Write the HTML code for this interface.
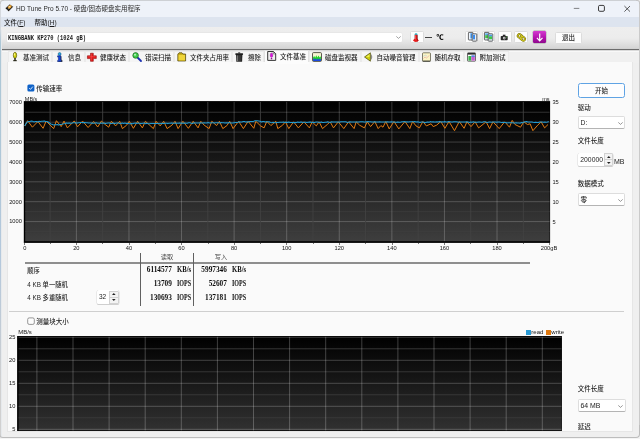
<!DOCTYPE html>
<html lang="zh-CN"><head><meta charset="utf-8"><title>HD Tune Pro 5.70</title><style>
html,body{margin:0;padding:0}
body{width:640px;height:439px;overflow:hidden;position:relative;background:#efefef;font-family:"Liberation Sans","Noto Sans CJK SC",sans-serif;font-size:6.5px;color:#222}
.a{position:absolute;white-space:nowrap;line-height:1}
.t{position:absolute;white-space:nowrap;line-height:8px;height:8px;font-size:6.5px;color:#1e1e1e;font-weight:500}
.n{position:absolute;white-space:nowrap;line-height:6px;height:6px;font-size:5.7px;color:#151515}
.m{position:absolute;white-space:nowrap;line-height:8px;height:8px;font-family:"Liberation Serif",serif;font-weight:bold;font-size:7.3px;color:#0c0c0c;text-align:right}
.box{position:absolute;box-sizing:border-box;background:#fff;border:0.5px solid #dddddd;border-bottom-color:#b4b4b4;border-radius:1.8px}
.btn{position:absolute;box-sizing:border-box;background:#fdfdfd;border:0.5px solid #dcdcdc;border-radius:1.5px}
.tab{position:absolute;box-sizing:border-box;top:51.4px;height:11.2px;background:#f5f5f5;border:0.5px solid #ebebeb;border-bottom:none}
svg{position:absolute;overflow:visible}
</style></head><body>
<div id="win" style="position:absolute;left:0;top:0;width:640px;height:439px;will-change:transform">
<div class="a" style="left:0;top:0;width:640px;height:17px;background:#eef2f9"></div>
<div class="a" style="left:0;top:17px;width:640px;height:10.2px;background:#dde4ef"></div>
<div class="a" style="left:0;top:27px;width:640px;height:22px;background:linear-gradient(#eeeeee 0,#ececec 50%,#e2e2e2 72%,#d3d3d3 100%)"></div>
<div class="a" style="left:0;top:48px;width:640px;height:4px;background:linear-gradient(#d2d2d2 0,#d2d2d2 25%,#6c6c6c 25%,#6c6c6c 50%,#dadada 50%,#dadada 75%,#f8f8f8 75%,#f8f8f8 100%)"></div>
<div class="a" style="left:0;top:52px;width:640px;height:11px;background:#f0f0f0"></div>
<div class="a" style="left:0;top:0;width:640px;height:0.9px;background:#cdd0d4"></div>
<svg style="left:4.8px;top:4.1px" width="8.6" height="7.8" viewBox="0 0 8.6 7.8"><path d="M0.2 4.3 L4.7 0.2 L8.4 2.7 L3.7 7.6 Z" fill="#1c1a18" stroke="#fff" stroke-width="0.5" stroke-opacity="0.8"/><ellipse cx="4.7" cy="2.9" rx="2.1" ry="1.5" transform="rotate(-32 4.7 2.9)" fill="#e29a2c"/><ellipse cx="4.5" cy="2.7" rx="0.9" ry="0.7" fill="#ffe6b0"/><path d="M2.6 5.2L4.2 4.4" stroke="#d8d8d8" stroke-width="0.5"/></svg>
<div class="t" style="left:16px;top:4.5px;color:#2c2c2c;font-weight:400">HD Tune Pro 5.70 - 硬盘/固态硬盘实用程序</div>
<svg style="left:570px;top:2px" width="66" height="14" viewBox="570 2 66 14"><path d="M573.8 8.4H579.3" stroke="#444" stroke-width="0.65" fill="none"/><rect x="598.5" y="5.4" width="5.9" height="5.9" rx="1.3" stroke="#333" stroke-width="0.95" fill="none"/><path d="M624.4 6L630 11.6M630 6L624.4 11.6" stroke="#333" stroke-width="0.8" fill="none"/></svg>
<div class="t" style="left:4px;top:18.5px"><span>文件(<u>F</u>)</span></div>
<div class="t" style="left:34.5px;top:18.5px"><span>帮助(<u>H</u>)</span></div>
<div class="a" style="left:6.9px;top:32.7px;width:395.6px;height:9.6px;background:#fff;border-radius:1.2px;box-shadow:0 0 0 0.4px #e2e2e2"></div>
<div class="a" style="left:8.2px;top:33.5px;height:8px;line-height:8px;font-family:'Liberation Mono',monospace;font-size:7.4px;font-weight:bold;color:#1a1a1a;transform:scaleX(0.732);transform-origin:0 50%">KINGBANK KP270 (1024 gB)</div>
<svg style="left:395.5px;top:36px" width="5" height="3" viewBox="0 0 5 3"><path d="M0.3 0.4L2.5 2.4L4.7 0.4" stroke="#666" stroke-width="0.6" fill="none"/></svg>
<div class="btn" style="left:409.6px;top:31.2px;width:14.4px;height:11.9px"></div>
<svg style="left:413.3px;top:32.7px" width="6" height="9.2" viewBox="0 0 6 9.2"><rect x="1.7" y="0.2" width="2.7" height="7" rx="1" fill="#2fb6c8"/><rect x="1.7" y="1.8" width="2.7" height="5" fill="#e61c1c"/><ellipse cx="2.9" cy="7.3" rx="2.5" ry="1.75" fill="#e61c1c"/><path d="M4.2 2.2V6Q5.3 7.2 4.4 8.5" stroke="#7a0a0a" stroke-width="0.55" fill="none"/><path d="M2.4 2.4V6.4" stroke="#ff9090" stroke-width="0.5"/></svg>
<div class="a" style="left:425.3px;top:37px;width:7px;height:0.8px;background:#444"></div>
<div class="t" style="left:436.4px;top:33.2px;font-weight:900;color:#000;font-size:7.2px;transform:scaleY(0.78);font-family:'Liberation Sans','Noto Sans CJK SC',sans-serif">℃</div>
<div class="btn" style="left:464.9px;top:31.2px;width:13.5px;height:11.8px"></div>
<div class="btn" style="left:481.6px;top:31.2px;width:13.5px;height:11.8px"></div>
<div class="btn" style="left:498px;top:31.2px;width:13.5px;height:11.8px"></div>
<div class="btn" style="left:514.2px;top:31.2px;width:13.5px;height:11.8px"></div>
<svg style="left:467.8px;top:32.4px" width="9.4" height="9.6" viewBox="0 0 9.4 9.6"><rect x="0.4" y="0.4" width="4.6" height="7.6" rx="0.6" fill="#eef5fd" stroke="#2a2a2a" stroke-width="0.7"/><rect x="2.4" y="1.2" width="1.9" height="5.2" fill="#4a9aee"/><rect x="4.2" y="1.8" width="4.6" height="7.4" rx="0.6" fill="#eaf3fd" stroke="#2a2a2a" stroke-width="0.7"/><rect x="5" y="2.8" width="2" height="4.6" fill="#3b8cec"/><rect x="4.8" y="7.9" width="3.4" height="0.8" fill="#bbb"/></svg>
<svg style="left:484.4px;top:32.4px" width="9.4" height="9.6" viewBox="0 0 9.4 9.6"><rect x="0.4" y="0.4" width="4.6" height="7.6" rx="0.6" fill="#dcecf8" stroke="#2a2a2a" stroke-width="0.7"/><rect x="1.2" y="1.4" width="3" height="2" fill="#5aa8e8"/><rect x="1.2" y="3.2" width="3" height="3" fill="#46c44a"/><rect x="4.2" y="1.8" width="4.6" height="7.4" rx="0.6" fill="#d8eaf8" stroke="#2a2a2a" stroke-width="0.7"/><rect x="5" y="2.8" width="3" height="1.8" fill="#4a9ae6"/><rect x="5" y="4.4" width="3" height="2.8" fill="#3ec846"/><rect x="4.8" y="7.9" width="3.4" height="0.8" fill="#bbb"/></svg>
<svg style="left:500.4px;top:34px" width="8.6" height="7" viewBox="0 0 9 8"><rect x="0.4" y="2.2" width="8" height="5" rx="0.8" fill="#2a2a2a"/><rect x="2.8" y="0.8" width="3" height="1.8" fill="#2a2a2a"/><circle cx="4.4" cy="4.7" r="1.5" fill="#e8e8e8"/><circle cx="4.4" cy="4.7" r="0.8" fill="#444"/><rect x="6.4" y="3" width="1.2" height="0.9" fill="#58c34a"/></svg>
<svg style="left:516.6px;top:33.4px" width="8.8" height="8.8" viewBox="0 0 9 9"><g transform="rotate(40 4.5 4.5)" fill="none"><rect x="0.2" y="2.8" width="5" height="3.4" rx="1.6" stroke="#6b610c" stroke-width="2"/><rect x="3.8" y="2.8" width="5" height="3.4" rx="1.6" stroke="#6b610c" stroke-width="2"/><rect x="0.2" y="2.8" width="5" height="3.4" rx="1.6" stroke="#cfc820" stroke-width="1.1"/><rect x="3.8" y="2.8" width="5" height="3.4" rx="1.6" stroke="#cfc820" stroke-width="1.1"/></g></svg>
<div class="a" style="left:533px;top:31.4px;width:13px;height:12px;border-radius:1.2px;background:linear-gradient(#d43ad0,#b010ac 60%,#8e0a8c);box-shadow:0 0 0 0.4px #a2a2a2"></div>
<svg style="left:535.8px;top:33px" width="7.4" height="9" viewBox="0 0 7.4 9"><path d="M3.7 0.5V7.5M0.9 4.9L3.7 7.8L6.5 4.9" stroke="#fff" stroke-width="1.2" fill="none"/></svg>
<div class="btn" style="left:554.6px;top:31.8px;width:27.6px;height:11.8px;background:#fdfdfd"></div>
<div class="t" style="left:554.6px;width:27.6px;text-align:center;top:33.6px">退出</div>
<div class="tab" style="left:8px;width:44px"></div>
<svg style="left:11.5px;top:52px" width="6" height="10" viewBox="0 0 6 10"><ellipse cx="3" cy="3.3" rx="1.7" ry="3" fill="#d6d410" stroke="#4a4608" stroke-width="0.6"/><ellipse cx="2.5" cy="2.4" rx="0.6" ry="1.2" fill="#f6f48a"/><rect x="2.2" y="6" width="1.6" height="2" fill="#3a3a2a"/><rect x="1.3" y="8" width="3.4" height="1.2" fill="#2d2d1e"/></svg>
<div class="t" style="left:23px;top:54px">基准测试</div>
<div class="tab" style="left:52px;width:32.5px"></div>
<svg style="left:57.3px;top:52px" width="6" height="10" viewBox="0 0 6 10"><circle cx="2.6" cy="2" r="1.5" fill="#25a6e2" stroke="#0e4f78" stroke-width="0.5"/><path d="M0.6 3.8H3.9V8.4H4.8V9.7H0.6V8.4H1.4V5.1H0.6Z" fill="#1243e0" stroke="#071a66" stroke-width="0.5"/><path d="M4.1 4.4V8.2H5V9.9H1.5" stroke="#111" stroke-width="0.5" fill="none"/></svg>
<div class="t" style="left:68px;top:54px">信息</div>
<div class="tab" style="left:84.5px;width:44.5px"></div>
<svg style="left:87.4px;top:52px" width="10" height="10" viewBox="0 0 10 10"><path d="M3.5 1.2H6.3V3.8H9.3V6.6H6.3V9.3H3.5V6.6H0.4V3.8H3.5Z" fill="#e31a1a" stroke="#8e0d0d" stroke-width="0.6"/><path d="M4.3 2V8.4M1.3 4.7H8.4" stroke="#ff6a6a" stroke-width="0.6" opacity="0.7"/></svg>
<div class="t" style="left:100px;top:54px">健康状态</div>
<div class="tab" style="left:129px;width:45px"></div>
<svg style="left:132.2px;top:52px" width="10" height="10" viewBox="0 0 10 10"><path d="M5 5L9 9" stroke="#1a2fb0" stroke-width="1.8" stroke-linecap="round"/><circle cx="3.6" cy="3.4" r="2.8" fill="#3fd04b" stroke="#1b5a22" stroke-width="0.7"/><circle cx="3" cy="2.7" r="1" fill="#b9f5bd"/></svg>
<div class="t" style="left:145px;top:54px">错误扫描</div>
<div class="tab" style="left:174px;width:58px"></div>
<svg style="left:177px;top:52px" width="10" height="10" viewBox="0 0 10 10"><path d="M0.8 2.2L2 0.8H5L6 2H8.6V9H0.8Z" fill="#c9ae1a" stroke="#4d4208" stroke-width="0.7"/><rect x="1.6" y="3" width="6.4" height="5.4" fill="#efd53a"/></svg>
<div class="t" style="left:190px;top:54px">文件夹占用率</div>
<div class="tab" style="left:232px;width:32px"></div>
<svg style="left:234.9px;top:52px" width="8.4" height="10" viewBox="0 0 8.4 10"><rect x="3.2" y="0.4" width="2" height="1" fill="#222"/><rect x="0.3" y="1.2" width="7.8" height="1.7" rx="0.6" fill="#1c1c1c"/><path d="M1 3H7.4L7.1 9.7H1.3Z" fill="#262626"/><path d="M2.3 3.4V9.2" stroke="#a8a8a8" stroke-width="0.8"/><path d="M4 3.4V9.2" stroke="#6a6a6a" stroke-width="0.6"/><path d="M5.6 3.4V9.2" stroke="#4a4a4a" stroke-width="0.5"/></svg>
<div class="t" style="left:248px;top:54px">擦除</div>
<div class="tab" style="left:264px;width:45px;top:50.1px;height:13.5px;background:#fcfcfc;border-color:#e2e2e2"></div>
<svg style="left:266.8px;top:51.2px" width="9.4" height="10" viewBox="0 0 9.4 10"><path d="M0.7 0.5H6.4L8.7 2.7V9.4H0.7Z" fill="#efefef" stroke="#222" stroke-width="0.9" stroke-linejoin="round"/><path d="M6.2 0.6V2.9H8.6" stroke="#222" stroke-width="0.5" fill="none"/><ellipse cx="4.5" cy="4.2" rx="1.25" ry="2.3" fill="#dc14dc" stroke="#70087a" stroke-width="0.3"/><rect x="3.8" y="7" width="1.4" height="1.3" fill="#8a0a92"/></svg>
<div class="t" style="left:280px;top:53.1px">文件基准</div>
<div class="tab" style="left:309px;width:51.5px"></div>
<svg style="left:312px;top:52px" width="10" height="10" viewBox="0 0 10 10"><rect x="0.5" y="0.6" width="9" height="8.8" rx="1" fill="#f6f5d2" stroke="#33332a" stroke-width="0.8"/><path d="M1.1 8.9V5.2L2.2 3.9L3.2 5.8L4.3 3.2L5.3 5.6L6.5 3.6L7.6 5.4L8.9 4.2V8.9Z" fill="#22d42a"/><path d="M1.1 8.9V7.6L2 6L2.9 7.8L3.9 6.2L4.9 7.9L5.9 6.2L6.9 7.8L7.9 6.4L8.9 7.6V8.9Z" fill="#1c48e0"/></svg>
<div class="t" style="left:325px;top:54px">磁盘监视器</div>
<div class="tab" style="left:360.5px;width:58.0px"></div>
<svg style="left:363.6px;top:52px" width="10" height="10" viewBox="0 0 10 10"><path d="M7 2Q9.6 5 7 8Z" fill="#8e8e8e"/><path d="M0.5 5L6.4 0.8V9.2Z" fill="#cfd010" stroke="#45450a" stroke-width="0.7" stroke-linejoin="round"/><path d="M2.2 4.8L5.4 2.6V5Z" fill="#f2f25a"/></svg>
<div class="t" style="left:376.4px;top:54px">自动噪音管理</div>
<div class="tab" style="left:418.5px;width:45.0px"></div>
<svg style="left:421.8px;top:52px" width="9" height="10" viewBox="0 0 9 10"><rect x="0.5" y="0.8" width="8" height="8.4" rx="0.8" fill="#fbf5c4" stroke="#4c4a3a" stroke-width="0.7"/><path d="M0.6 9.2H8.4" stroke="#2a2a22" stroke-width="0.8"/><path d="M1.5 6.5L3 5L4.5 6L7.4 3.4" stroke="#e79a9a" stroke-width="0.6" fill="none"/><path d="M1.4 4.2L3.4 3.2L5 4.2" stroke="#9ab6e8" stroke-width="0.5" fill="none"/></svg>
<div class="t" style="left:434.5px;top:54px">随机存取</div>
<div class="tab" style="left:463.5px;width:45.5px"></div>
<svg style="left:466.8px;top:52px" width="9" height="10" viewBox="0 0 9 10"><rect x="0.5" y="0.8" width="8" height="8.4" rx="0.6" fill="#fdfdfd" stroke="#333" stroke-width="0.7"/><rect x="0.8" y="1" width="7.4" height="1.6" fill="#2c2c2c"/><rect x="1.4" y="4" width="3" height="4.6" fill="#39b54a"/><rect x="4.4" y="4.6" width="3.4" height="4" fill="#c85ad0"/><rect x="4.4" y="3.4" width="3.4" height="1.4" fill="#3c6be0"/></svg>
<div class="t" style="left:479.5px;top:54px">附加测试</div>
<div class="a" style="left:7px;top:62.4px;width:625.8px;height:369.8px;box-sizing:border-box;background:#fafafa;border:0.6px solid #e6e6e6;border-top:none"></div>
<div class="a" style="left:264.5px;top:62px;width:44px;height:2px;background:#fcfcfc"></div>
<svg style="left:27px;top:84px" width="8" height="8" viewBox="27 84 8 8"><rect x="27.4" y="84.4" width="7" height="7.1" rx="1.5" fill="#0f62c8"/><path d="M29.2 88L30.5 89.4L32.8 86.6" stroke="#fff" stroke-width="0.8" fill="none"/></svg>
<div class="t" style="left:36.2px;top:84.7px">传输速率</div>
<svg style="left:23px;top:101px" width="528" height="142" viewBox="23 101 528 142"><defs><linearGradient id="g1" x1="0" y1="0" x2="0" y2="1"><stop offset="0" stop-color="#000"/><stop offset="0.22" stop-color="#0b0b0b"/><stop offset="1" stop-color="#3e3e3e"/></linearGradient></defs><rect x="23.8" y="101.1" width="526.3000000000001" height="141.8" fill="#000"/><rect x="25.2" y="101.9" width="524.4" height="139.29999999999998" fill="url(#g1)"/><line x1="25.2" x2="549.6" y1="112.24" y2="112.24" stroke="#3d3d3d" stroke-width="0.8"/><line x1="25.2" x2="549.6" y1="122.18" y2="122.18" stroke="#fff" stroke-opacity="0.27" stroke-width="0.75"/><line x1="25.2" x2="549.6" y1="132.12" y2="132.12" stroke="#3d3d3d" stroke-width="0.8"/><line x1="25.2" x2="549.6" y1="142.06" y2="142.06" stroke="#fff" stroke-opacity="0.27" stroke-width="0.75"/><line x1="25.2" x2="549.6" y1="152.00" y2="152.00" stroke="#3d3d3d" stroke-width="0.8"/><line x1="25.2" x2="549.6" y1="161.94" y2="161.94" stroke="#fff" stroke-opacity="0.27" stroke-width="0.75"/><line x1="25.2" x2="549.6" y1="171.88" y2="171.88" stroke="#3d3d3d" stroke-width="0.8"/><line x1="25.2" x2="549.6" y1="181.82" y2="181.82" stroke="#fff" stroke-opacity="0.27" stroke-width="0.75"/><line x1="25.2" x2="549.6" y1="191.76" y2="191.76" stroke="#3d3d3d" stroke-width="0.8"/><line x1="25.2" x2="549.6" y1="201.70" y2="201.70" stroke="#fff" stroke-opacity="0.27" stroke-width="0.75"/><line x1="25.2" x2="549.6" y1="211.64" y2="211.64" stroke="#3d3d3d" stroke-width="0.8"/><line x1="25.2" x2="549.6" y1="221.58" y2="221.58" stroke="#fff" stroke-opacity="0.27" stroke-width="0.75"/><line x1="25.2" x2="549.6" y1="231.52" y2="231.52" stroke="#3d3d3d" stroke-width="0.8"/><line x1="50.09" x2="50.09" y1="101.9" y2="241.2" stroke="#424242" stroke-width="0.9"/><line x1="76.38" x2="76.38" y1="101.9" y2="241.2" stroke="#fff" stroke-opacity="0.28" stroke-width="0.75"/><line x1="102.67" x2="102.67" y1="101.9" y2="241.2" stroke="#424242" stroke-width="0.9"/><line x1="128.96" x2="128.96" y1="101.9" y2="241.2" stroke="#fff" stroke-opacity="0.28" stroke-width="0.75"/><line x1="155.25" x2="155.25" y1="101.9" y2="241.2" stroke="#424242" stroke-width="0.9"/><line x1="181.54" x2="181.54" y1="101.9" y2="241.2" stroke="#fff" stroke-opacity="0.28" stroke-width="0.75"/><line x1="207.83" x2="207.83" y1="101.9" y2="241.2" stroke="#424242" stroke-width="0.9"/><line x1="234.12" x2="234.12" y1="101.9" y2="241.2" stroke="#fff" stroke-opacity="0.28" stroke-width="0.75"/><line x1="260.41" x2="260.41" y1="101.9" y2="241.2" stroke="#424242" stroke-width="0.9"/><line x1="286.70" x2="286.70" y1="101.9" y2="241.2" stroke="#fff" stroke-opacity="0.28" stroke-width="0.75"/><line x1="312.99" x2="312.99" y1="101.9" y2="241.2" stroke="#424242" stroke-width="0.9"/><line x1="339.28" x2="339.28" y1="101.9" y2="241.2" stroke="#fff" stroke-opacity="0.28" stroke-width="0.75"/><line x1="365.57" x2="365.57" y1="101.9" y2="241.2" stroke="#424242" stroke-width="0.9"/><line x1="391.86" x2="391.86" y1="101.9" y2="241.2" stroke="#fff" stroke-opacity="0.28" stroke-width="0.75"/><line x1="418.15" x2="418.15" y1="101.9" y2="241.2" stroke="#424242" stroke-width="0.9"/><line x1="444.44" x2="444.44" y1="101.9" y2="241.2" stroke="#fff" stroke-opacity="0.28" stroke-width="0.75"/><line x1="470.73" x2="470.73" y1="101.9" y2="241.2" stroke="#424242" stroke-width="0.9"/><line x1="497.02" x2="497.02" y1="101.9" y2="241.2" stroke="#fff" stroke-opacity="0.28" stroke-width="0.75"/><line x1="523.31" x2="523.31" y1="101.9" y2="241.2" stroke="#424242" stroke-width="0.9"/><polyline points="24.8,125.9 27.6,120.7 32.4,127.2 37.9,121.5 43.1,128.3 46.1,121.1 53.7,128.6 56.4,120.7 61.2,126.6 64.0,121.1 67.4,127.9 74.3,120.9 77.5,126.8 82.6,121.1 88.1,127.5 93.6,121.5 97.7,127.0 101.4,121.1 105.2,124.5 108.7,127.2 111.4,121.3 115.6,125.9 119.7,121.3 122.4,128.6 126.6,125.2 129.3,121.3 133.4,128.3 137.6,121.3 142.4,127.9 145.4,121.3 153.4,128.6 156.1,121.3 160.2,125.9 163.7,121.3 167.1,128.6 171.9,125.2 175.0,121.3 178.1,128.6 182.9,121.3 188.4,128.3 193.2,121.3 198.1,127.9 200.8,121.3 204.2,125.2 209.1,128.6 211.8,121.3 216.6,125.6 219.4,121.3 222.8,128.6 226.9,125.6 229.7,121.3 233.1,128.6 238.6,121.3 243.4,128.6 248.2,121.3 253.8,128.3 255.8,121.3 260.6,125.9 264.1,127.9 266.8,121.3 270.9,125.6 275.8,121.3 277.8,128.6 282.6,125.2 285.4,121.8 288.8,128.6 293.6,121.8 298.4,127.9 303.9,121.8 309.4,127.9 312.2,121.8 316.3,125.9 319.1,121.8 322.5,128.6 327.3,124.5 330.1,121.8 333.5,127.9 338.3,121.8 343.8,128.6 348.6,121.8 354.1,128.6 356.2,121.8 359.6,125.2 364.4,127.9 367.2,121.8 370.6,126.6 374.8,121.5 378.2,128.6 380.9,125.6 383.0,127.2 385.8,121.5 389.2,128.9 394.0,121.5 398.8,128.9 405.0,121.5 409.8,128.6 412.6,121.5 416.0,125.9 419.4,127.9 422.9,121.5 426.3,125.9 431.1,123.8 433.2,126.6 436.6,125.2 440.8,121.5 444.9,128.3 449.0,121.5 454.5,130.7 459.3,121.5 464.1,128.3 466.9,121.8 471.0,126.6 475.1,121.8 478.6,127.9 482.0,125.2 486.1,121.8 489.6,128.6 493.0,121.8 499.2,128.6 504.7,121.8 509.5,127.2 512.2,120.4 515.0,124.5 520.5,127.2 523.9,121.8 527.4,124.5 530.1,123.8 532.9,130.7 537.7,125.2 541.1,121.8 544.6,127.9 548.0,124.5" fill="none" stroke="#e07a12" stroke-width="1.0" stroke-linejoin="round"/><polyline points="24.8,125.9 26.1,123.6 27.4,121.7 28.7,121.5 30.0,121.4 31.3,121.1 32.6,121.2 33.9,121.9 35.2,121.6 36.5,121.5 37.8,121.9 39.1,121.3 40.4,121.4 41.7,121.2 43.0,121.3 44.3,121.0 45.6,121.4 46.9,121.6 48.2,122.0 49.5,123.0 50.8,123.9 52.1,124.3 53.4,124.9 54.7,124.8 56.0,124.7 57.3,124.6 58.6,125.1 59.9,124.5 61.2,124.4 62.5,124.1 63.8,123.7 65.1,123.5 66.4,122.9 67.7,123.2 69.0,123.0 70.3,123.3 71.6,123.3 72.9,122.7 74.2,122.7 75.5,122.8 76.8,123.2 78.1,122.7 79.4,122.7 80.7,122.5 82.0,122.6 83.3,122.6 84.6,122.6 85.9,122.8 87.2,122.8 88.5,123.1 89.8,122.9 91.1,123.1 92.4,123.1 93.7,123.2 95.0,123.0 96.3,122.7 97.6,123.2 98.9,123.3 100.2,123.3 101.5,123.1 102.8,123.2 104.1,122.9 105.4,123.4 106.7,123.2 108.0,123.0 109.3,122.9 110.6,123.5 111.9,123.6 113.2,122.9 114.5,123.5 115.8,123.2 117.1,123.0 118.4,123.1 119.7,123.5 121.0,123.6 122.3,123.0 123.6,123.4 124.9,123.0 126.2,123.5 127.5,123.2 128.8,123.6 130.1,123.7 131.4,123.4 132.7,123.7 134.0,123.3 135.3,123.1 136.6,123.5 137.9,123.1 139.2,123.2 140.5,123.4 141.8,123.5 143.1,123.2 144.4,123.1 145.7,123.7 147.0,123.3 148.3,123.8 149.6,123.8 150.9,123.4 152.2,123.4 153.5,123.5 154.8,123.5 156.1,123.5 157.4,123.5 158.7,123.5 160.0,123.7 161.3,123.4 162.6,123.3 163.9,123.5 165.2,123.2 166.5,123.2 167.8,123.6 169.1,123.3 170.4,123.3 171.7,122.9 173.0,123.2 174.3,123.3 175.6,122.9 176.9,123.3 178.2,123.3 179.5,122.9 180.8,123.3 182.1,123.1 183.4,123.3 184.7,123.0 186.0,123.3 187.3,123.3 188.6,122.7 189.9,122.8 191.2,123.2 192.5,123.4 193.8,122.8 195.1,123.0 196.4,123.1 197.7,122.9 199.0,122.9 200.3,122.8 201.6,122.9 202.9,123.0 204.2,122.8 205.5,122.9 206.8,123.1 208.1,122.6 209.4,123.0 210.7,123.1 212.0,122.8 213.3,122.7 214.6,123.1 215.9,122.7 217.2,122.7 218.5,122.8 219.8,123.0 221.1,122.6 222.4,122.7 223.7,122.7 225.0,123.1 226.3,122.8 227.6,123.1 228.9,122.6 230.2,122.7 231.5,122.9 232.8,123.1 234.1,122.8 235.4,122.6 236.7,122.4 238.0,122.3 239.3,121.8 240.6,122.0 241.9,122.0 243.2,121.5 244.5,121.6 245.8,121.9 247.1,121.8 248.4,121.9 249.7,121.5 251.0,121.4 252.3,121.4 253.6,121.4 254.9,120.7 256.2,120.7 257.5,120.8 258.8,121.0 260.1,121.3 261.4,122.0 262.7,121.5 264.0,121.4 265.3,121.9 266.6,121.8 267.9,121.8 269.2,121.8 270.5,122.4 271.8,122.7 273.1,122.3 274.4,122.7 275.7,122.7 277.0,122.6 278.3,122.5 279.6,122.3 280.9,122.3 282.2,122.2 283.5,122.1 284.8,122.5 286.1,122.2 287.4,122.6 288.7,122.1 290.0,122.6 291.3,122.5 292.6,122.6 293.9,122.6 295.2,122.6 296.5,122.4 297.8,122.0 299.1,122.5 300.4,122.1 301.7,122.1 303.0,122.4 304.3,122.3 305.6,122.2 306.9,122.6 308.2,122.3 309.5,122.1 310.8,122.1 312.1,122.5 313.4,122.2 314.7,122.4 316.0,122.1 317.3,122.0 318.6,122.2 319.9,122.4 321.2,121.9 322.5,122.4 323.8,122.4 325.1,122.3 326.4,122.3 327.7,121.8 329.0,122.2 330.3,122.4 331.6,121.8 332.9,121.9 334.2,121.9 335.5,122.1 336.8,122.0 338.1,122.0 339.4,122.2 340.7,121.7 342.0,121.7 343.3,121.8 344.6,121.8 345.9,121.7 347.2,122.4 348.5,122.3 349.8,121.7 351.1,122.0 352.4,121.9 353.7,121.9 355.0,121.9 356.3,122.1 357.6,122.0 358.9,121.9 360.2,121.7 361.5,121.8 362.8,121.7 364.1,122.0 365.4,122.1 366.7,121.8 368.0,121.6 369.3,121.7 370.6,121.8 371.9,122.0 373.2,122.1 374.5,121.8 375.8,122.1 377.1,122.0 378.4,121.9 379.7,121.8 381.0,121.9 382.3,122.1 383.6,121.9 384.9,122.1 386.2,121.9 387.5,121.8 388.8,122.0 390.1,122.1 391.4,121.7 392.7,121.9 394.0,121.9 395.3,122.2 396.6,122.3 397.9,121.9 399.2,122.3 400.5,122.2 401.8,121.7 403.1,121.8 404.4,121.5 405.7,121.9 407.0,121.8 408.3,121.9 409.6,121.7 410.9,121.7 412.2,121.8 413.5,121.8 414.8,121.6 416.1,122.0 417.4,121.7 418.7,121.9 420.0,122.4 421.3,122.0 422.6,122.1 423.9,122.2 425.2,122.8 426.5,122.2 427.8,121.9 429.1,122.3 430.4,121.6 431.7,121.9 433.0,121.7 434.3,121.9 435.6,122.0 436.9,121.7 438.2,121.9 439.5,121.4 440.8,121.9 442.1,121.8 443.4,121.9 444.7,121.5 446.0,122.0 447.3,122.1 448.6,121.5 449.9,121.7 451.2,121.9 452.5,122.1 453.8,121.7 455.1,121.7 456.4,121.8 457.7,122.0 459.0,122.2 460.3,121.9 461.6,121.9 462.9,121.9 464.2,121.9 465.5,122.0 466.8,121.7 468.1,122.0 469.4,122.4 470.7,122.0 472.0,122.2 473.3,121.8 474.6,122.2 475.9,122.2 477.2,122.2 478.5,122.1 479.8,122.0 481.1,122.2 482.4,122.3 483.7,121.8 485.0,121.8 486.3,122.2 487.6,122.4 488.9,122.1 490.2,122.0 491.5,122.2 492.8,121.9 494.1,121.9 495.4,121.9 496.7,122.2 498.0,122.0 499.3,121.9 500.6,122.3 501.9,122.6 503.2,122.2 504.5,122.6 505.8,122.5 507.1,122.9 508.4,122.8 509.7,122.7 511.0,122.7 512.3,122.7 513.6,123.0 514.9,122.9 516.2,122.8 517.5,122.9 518.8,122.9 520.1,123.2 521.4,122.4 522.7,122.7 524.0,122.1 525.3,121.8 526.6,121.6 527.9,122.0 529.2,122.1 530.5,122.0 531.8,122.0 533.1,122.3 534.4,122.5 535.7,122.2 537.0,122.4 538.3,122.5 539.6,122.1 540.9,121.9 542.2,121.9 543.5,122.2 544.8,122.1 546.1,122.2 547.4,122.1 548.7,121.6" fill="none" stroke="#229ad0" stroke-width="1.05" stroke-linejoin="round"/></svg>
<div class="n" style="left:24.8px;top:95.7px;font-size:5.5px;color:#1a1a1a">MB/s</div>
<div class="n" style="left:542.2px;top:95.9px;font-size:5.6px;color:#1a1a1a">ms</div>
<div class="n" style="left:4px;width:17.8px;text-align:right;top:99.1px">7000</div>
<div class="n" style="left:4px;width:17.8px;text-align:right;top:118.97999999999999px">6000</div>
<div class="n" style="left:4px;width:17.8px;text-align:right;top:138.86px">5000</div>
<div class="n" style="left:4px;width:17.8px;text-align:right;top:158.74px">4000</div>
<div class="n" style="left:4px;width:17.8px;text-align:right;top:178.62px">3000</div>
<div class="n" style="left:4px;width:17.8px;text-align:right;top:198.5px">2000</div>
<div class="n" style="left:4px;width:17.8px;text-align:right;top:218.38px">1000</div>
<div class="n" style="left:552.4px;top:99.3px">35</div>
<div class="n" style="left:552.4px;top:119.17999999999999px">30</div>
<div class="n" style="left:552.4px;top:139.06px">25</div>
<div class="n" style="left:552.4px;top:158.94px">20</div>
<div class="n" style="left:552.4px;top:178.82px">15</div>
<div class="n" style="left:552.4px;top:198.7px">10</div>
<div class="n" style="left:552.4px;top:218.57999999999998px">5</div>
<div class="n" style="left:23.2px;top:245px">0</div>
<div class="n" style="left:66.38000000000001px;width:20px;text-align:center;top:245px">20</div>
<div class="n" style="left:118.96000000000001px;width:20px;text-align:center;top:245px">40</div>
<div class="n" style="left:171.54000000000002px;width:20px;text-align:center;top:245px">60</div>
<div class="n" style="left:224.12000000000003px;width:20px;text-align:center;top:245px">80</div>
<div class="n" style="left:276.70000000000005px;width:20px;text-align:center;top:245px">100</div>
<div class="n" style="left:329.28000000000003px;width:20px;text-align:center;top:245px">120</div>
<div class="n" style="left:381.86000000000007px;width:20px;text-align:center;top:245px">140</div>
<div class="n" style="left:434.44000000000005px;width:20px;text-align:center;top:245px">160</div>
<div class="n" style="left:487.0200000000001px;width:20px;text-align:center;top:245px">180</div>
<div class="n" style="left:520px;width:37.2px;text-align:right;top:245px">200gB</div>
<div class="a" style="left:23.50px;top:242.8px;width:0.6px;height:2.2px;background:#777"></div>
<div class="a" style="left:49.79px;top:242.8px;width:0.6px;height:1px;background:#777"></div>
<div class="a" style="left:76.08px;top:242.8px;width:0.6px;height:2.2px;background:#777"></div>
<div class="a" style="left:102.37px;top:242.8px;width:0.6px;height:1px;background:#777"></div>
<div class="a" style="left:128.66px;top:242.8px;width:0.6px;height:2.2px;background:#777"></div>
<div class="a" style="left:154.95px;top:242.8px;width:0.6px;height:1px;background:#777"></div>
<div class="a" style="left:181.24px;top:242.8px;width:0.6px;height:2.2px;background:#777"></div>
<div class="a" style="left:207.53px;top:242.8px;width:0.6px;height:1px;background:#777"></div>
<div class="a" style="left:233.82px;top:242.8px;width:0.6px;height:2.2px;background:#777"></div>
<div class="a" style="left:260.11px;top:242.8px;width:0.6px;height:1px;background:#777"></div>
<div class="a" style="left:286.40px;top:242.8px;width:0.6px;height:2.2px;background:#777"></div>
<div class="a" style="left:312.69px;top:242.8px;width:0.6px;height:1px;background:#777"></div>
<div class="a" style="left:338.98px;top:242.8px;width:0.6px;height:2.2px;background:#777"></div>
<div class="a" style="left:365.27px;top:242.8px;width:0.6px;height:1px;background:#777"></div>
<div class="a" style="left:391.56px;top:242.8px;width:0.6px;height:2.2px;background:#777"></div>
<div class="a" style="left:417.85px;top:242.8px;width:0.6px;height:1px;background:#777"></div>
<div class="a" style="left:444.14px;top:242.8px;width:0.6px;height:2.2px;background:#777"></div>
<div class="a" style="left:470.43px;top:242.8px;width:0.6px;height:1px;background:#777"></div>
<div class="a" style="left:496.72px;top:242.8px;width:0.6px;height:2.2px;background:#777"></div>
<div class="a" style="left:523.01px;top:242.8px;width:0.6px;height:1px;background:#777"></div>
<div class="a" style="left:549.30px;top:242.8px;width:0.6px;height:2.2px;background:#777"></div>
<div class="a" style="left:25px;top:262px;width:505px;height:1.8px;background:#8e8e8e"></div>
<div class="a" style="left:140px;top:252.5px;width:1.2px;height:53px;background:#606060"></div>
<div class="a" style="left:193.2px;top:252.5px;width:1.2px;height:53px;background:#606060"></div>
<div class="t" style="left:141px;width:52px;text-align:center;top:253px;color:#4a4a4a;font-size:6.2px;font-weight:400">读取</div>
<div class="t" style="left:194px;width:54px;text-align:center;top:253px;color:#4a4a4a;font-size:6.2px;font-weight:400">写入</div>
<div class="t" style="left:27.2px;top:266.8px;font-size:6.3px">顺序</div>
<div class="m" style="left:131.9px;width:40px;top:265.90000000000003px">6114577</div>
<div class="m" style="left:176.8px;top:265.90000000000003px;text-align:left;transform:scaleX(0.915);transform-origin:0 50%">KB/s</div>
<div class="m" style="left:186.9px;width:40px;top:265.90000000000003px">5997346</div>
<div class="m" style="left:231.6px;top:265.90000000000003px;text-align:left;transform:scaleX(0.915);transform-origin:0 50%">KB/s</div>
<div class="t" style="left:27.2px;top:281.2px;font-size:6.3px">4 KB 单一随机</div>
<div class="m" style="left:131.9px;width:40px;top:280.40000000000003px">13709</div>
<div class="m" style="left:176.8px;top:280.40000000000003px;text-align:left;transform:scaleX(0.83);transform-origin:0 50%">IOPS</div>
<div class="m" style="left:186.9px;width:40px;top:280.40000000000003px">52607</div>
<div class="m" style="left:231.6px;top:280.40000000000003px;text-align:left;transform:scaleX(0.83);transform-origin:0 50%">IOPS</div>
<div class="t" style="left:27.2px;top:294.1px;font-size:6.3px">4 KB 多重随机</div>
<div class="m" style="left:131.9px;width:40px;top:294.20000000000005px">130693</div>
<div class="m" style="left:176.8px;top:294.20000000000005px;text-align:left;transform:scaleX(0.83);transform-origin:0 50%">IOPS</div>
<div class="m" style="left:186.9px;width:40px;top:294.20000000000005px">137181</div>
<div class="m" style="left:231.6px;top:294.20000000000005px;text-align:left;transform:scaleX(0.83);transform-origin:0 50%">IOPS</div>
<div class="a" style="left:96.9px;top:290.2px;width:22px;height:13.8px;box-sizing:border-box;background:#fff;border-radius:1.5px;box-shadow:0 0.5px 0 0.4px #cfcfcf"></div>
<div class="a" style="left:108.8px;top:290.59999999999997px;width:10.100000000000009px;height:13.200000000000001px;background:#d2d2d2;border-radius:0 1.5px 1.5px 0"></div>
<div class="a" style="left:109.8px;top:291.5px;width:8.100000000000009px;height:5.300000000000001px;background:#f3f3f3"></div>
<div class="a" style="left:109.8px;top:297.8px;width:8.100000000000009px;height:5.300000000000001px;background:#f3f3f3"></div>
<svg style="left:112.05px;top:293.15px" width="3.6" height="2" viewBox="0 0 3.6 2"><path d="M0 2L1.8 0L3.6 2Z" fill="#222"/></svg>
<svg style="left:112.05px;top:299.45px" width="3.6" height="2" viewBox="0 0 3.6 2"><path d="M0 0L1.8 2L3.6 0Z" fill="#222"/></svg>
<div class="t" style="left:99px;top:293.2px;">32</div>
<div class="a" style="left:8.5px;top:311px;width:615px;height:0.8px;background:#cfcfcf"></div>
<svg style="left:27px;top:317px" width="8" height="8" viewBox="27 317 8 8"><rect x="27.7" y="317.9" width="6.6" height="6.5" rx="1.5" fill="#fdfdfd" stroke="#7c7c7c" stroke-width="0.8"/></svg>
<div class="t" style="left:36.2px;top:317.6px">测量块大小</div>
<svg style="left:16px;top:335px" width="548" height="97" viewBox="16 335 548 97"><defs><linearGradient id="g2" x1="0" y1="0" x2="0" y2="1"><stop offset="0" stop-color="#000"/><stop offset="1" stop-color="#313131"/></linearGradient></defs><rect x="17.1" y="336" width="544.8" height="95" fill="#000"/><rect x="18.6" y="336.8" width="542.9" height="93.6" fill="url(#g2)"/><line x1="18.6" x2="561.5" y1="337.30" y2="337.30" stroke="#fff" stroke-opacity="0.30" stroke-width="0.75"/><line x1="18.6" x2="561.5" y1="348.80" y2="348.80" stroke="#3b3b3b" stroke-width="0.9"/><line x1="18.6" x2="561.5" y1="360.30" y2="360.30" stroke="#fff" stroke-opacity="0.30" stroke-width="0.75"/><line x1="18.6" x2="561.5" y1="371.80" y2="371.80" stroke="#3b3b3b" stroke-width="0.9"/><line x1="18.6" x2="561.5" y1="383.30" y2="383.30" stroke="#fff" stroke-opacity="0.30" stroke-width="0.75"/><line x1="18.6" x2="561.5" y1="394.80" y2="394.80" stroke="#3b3b3b" stroke-width="0.9"/><line x1="18.6" x2="561.5" y1="406.30" y2="406.30" stroke="#fff" stroke-opacity="0.30" stroke-width="0.75"/><line x1="18.6" x2="561.5" y1="417.80" y2="417.80" stroke="#3b3b3b" stroke-width="0.9"/><line x1="18.6" x2="561.5" y1="429.30" y2="429.30" stroke="#fff" stroke-opacity="0.30" stroke-width="0.75"/><line x1="36.90" x2="36.90" y1="336.8" y2="430.4" stroke="#fff" stroke-opacity="0.27" stroke-width="0.9"/><line x1="73.00" x2="73.00" y1="336.8" y2="430.4" stroke="#fff" stroke-opacity="0.27" stroke-width="0.9"/><line x1="109.10" x2="109.10" y1="336.8" y2="430.4" stroke="#fff" stroke-opacity="0.27" stroke-width="0.9"/><line x1="145.20" x2="145.20" y1="336.8" y2="430.4" stroke="#fff" stroke-opacity="0.27" stroke-width="0.9"/><line x1="181.30" x2="181.30" y1="336.8" y2="430.4" stroke="#fff" stroke-opacity="0.27" stroke-width="0.9"/><line x1="217.40" x2="217.40" y1="336.8" y2="430.4" stroke="#fff" stroke-opacity="0.27" stroke-width="0.9"/><line x1="253.50" x2="253.50" y1="336.8" y2="430.4" stroke="#fff" stroke-opacity="0.27" stroke-width="0.9"/><line x1="289.60" x2="289.60" y1="336.8" y2="430.4" stroke="#fff" stroke-opacity="0.27" stroke-width="0.9"/><line x1="325.70" x2="325.70" y1="336.8" y2="430.4" stroke="#fff" stroke-opacity="0.27" stroke-width="0.9"/><line x1="361.80" x2="361.80" y1="336.8" y2="430.4" stroke="#fff" stroke-opacity="0.27" stroke-width="0.9"/><line x1="397.90" x2="397.90" y1="336.8" y2="430.4" stroke="#fff" stroke-opacity="0.27" stroke-width="0.9"/><line x1="434.00" x2="434.00" y1="336.8" y2="430.4" stroke="#fff" stroke-opacity="0.27" stroke-width="0.9"/><line x1="470.10" x2="470.10" y1="336.8" y2="430.4" stroke="#fff" stroke-opacity="0.27" stroke-width="0.9"/><line x1="506.20" x2="506.20" y1="336.8" y2="430.4" stroke="#fff" stroke-opacity="0.27" stroke-width="0.9"/><line x1="542.30" x2="542.30" y1="336.8" y2="430.4" stroke="#fff" stroke-opacity="0.27" stroke-width="0.9"/></svg>
<div class="n" style="left:18.2px;top:329px;font-size:6px;color:#1a1a1a">MB/s</div>
<div class="n" style="left:1px;width:14.3px;text-align:right;top:334.1px">25</div>
<div class="n" style="left:1px;width:14.3px;text-align:right;top:357.1px">20</div>
<div class="n" style="left:1px;width:14.3px;text-align:right;top:380.1px">15</div>
<div class="n" style="left:1px;width:14.3px;text-align:right;top:403.1px">10</div>
<div class="n" style="left:1px;width:14.3px;text-align:right;top:426.1px">5</div>
<div class="a" style="left:526.3px;top:330px;width:4.7px;height:4.8px;background:#2a9bd6"></div>
<div class="n" style="left:531.3px;top:329.4px;font-size:6px">read</div>
<div class="a" style="left:546.1px;top:330px;width:4.7px;height:4.8px;background:#e07a10"></div>
<div class="n" style="left:551.3px;top:329.4px;font-size:6px">write</div>
<div class="a" style="left:578px;top:83.2px;width:46.8px;height:15.2px;box-sizing:border-box;border:0.8px solid #5fa3e4;border-radius:2.4px;background:#fdfdfe"></div>
<div class="t" style="left:578px;width:46.8px;text-align:center;top:87.3px">开始</div>
<div class="t" style="left:577.8px;top:104.2px">驱动</div>
<div class="box" style="left:578.4px;top:116.2px;width:47px;height:13px"></div>
<div class="t" style="left:580.6px;top:118.8px;font-size:6.8px;font-weight:400">D:</div>
<svg style="left:617.6px;top:121.6px" width="5" height="3" viewBox="0 0 5 3"><path d="M0.3 0.4L2.5 2.4L4.7 0.4" stroke="#555" stroke-width="0.6" fill="none"/></svg>
<div class="t" style="left:577.8px;top:136.6px">文件长度</div>
<div class="a" style="left:578px;top:153px;width:35px;height:13px;box-sizing:border-box;background:#fff;border-radius:1.5px;box-shadow:0 0.5px 0 0.4px #cfcfcf"></div>
<div class="a" style="left:604.2px;top:153.4px;width:8.799999999999955px;height:12.4px;background:#d2d2d2;border-radius:0 1.5px 1.5px 0"></div>
<div class="a" style="left:605.2px;top:154.3px;width:6.7999999999999545px;height:4.9px;background:#f3f3f3"></div>
<div class="a" style="left:605.2px;top:160.20000000000002px;width:6.7999999999999545px;height:4.9px;background:#f3f3f3"></div>
<svg style="left:606.8000000000001px;top:155.75px" width="3.6" height="2" viewBox="0 0 3.6 2"><path d="M0 2L1.8 0L3.6 2Z" fill="#222"/></svg>
<svg style="left:606.8000000000001px;top:161.65px" width="3.6" height="2" viewBox="0 0 3.6 2"><path d="M0 0L1.8 2L3.6 0Z" fill="#222"/></svg>
<div class="t" style="left:580.3px;top:155.8px;font-size:6.8px;font-weight:400">200000</div>
<div class="t" style="left:614px;top:158px;font-size:7px;font-weight:400">MB</div>
<div class="t" style="left:577.8px;top:180px">数据模式</div>
<div class="box" style="left:578.4px;top:193.4px;width:47px;height:13px"></div>
<div class="t" style="left:580.6px;top:196px">零</div>
<svg style="left:617.6px;top:198.8px" width="5" height="3" viewBox="0 0 5 3"><path d="M0.3 0.4L2.5 2.4L4.7 0.4" stroke="#555" stroke-width="0.6" fill="none"/></svg>
<div class="t" style="left:577.8px;top:384.8px">文件长度</div>
<div class="box" style="left:578px;top:399.4px;width:47.8px;height:13px"></div>
<div class="t" style="left:580.4px;top:402.2px;font-size:6.9px;font-weight:400">64 MB</div>
<svg style="left:617.6px;top:405px" width="5" height="3" viewBox="0 0 5 3"><path d="M0.3 0.4L2.5 2.4L4.7 0.4" stroke="#555" stroke-width="0.6" fill="none"/></svg>
<div class="t" style="left:577.8px;top:423.4px">延迟</div>
<div class="a" style="left:0;top:432.2px;width:640px;height:7px;background:#efefef"></div>
<div class="a" style="left:0;top:0;width:1.3px;height:439px;background:linear-gradient(#d8dade 0,#d2d8de 30px,#adc7d6 42px,#adc7d6 120px,#b4c8dc 260px,#c4ccd4 340px,#d0d0d0 380px,#d0d0d0 100%)"></div>
<div class="a" style="left:1.3px;top:30px;width:0.7px;height:407px;background:#e6e9ec"></div>
<div class="a" style="left:-1px;top:420px;width:641px;height:18.4px;box-sizing:border-box;border:1px solid #bdbdbd;border-top:none;border-radius:0 0 4px 4px;box-shadow:0 1px 0 1px #f4f4f4"></div>
<div class="a" style="left:639px;top:0;width:1px;height:425px;background:#cacaca"></div>
<svg style="left:636px;top:0" width="4" height="4" viewBox="0 0 4 4"><path d="M4 0H1A3 3 0 0 1 4 3Z" fill="#eeeeee"/><path d="M0 0.4H1A2.6 2.6 0 0 1 3.6 3V4" stroke="#c2c2c2" stroke-width="0.8" fill="none"/></svg>
<svg style="left:0;top:0" width="4" height="4" viewBox="0 0 4 4"><path d="M0 0H3A3 3 0 0 0 0 3Z" fill="#e4e4e4"/><path d="M4 0.4H3A2.6 2.6 0 0 0 0.4 3V4" stroke="#c2c2c2" stroke-width="0.8" fill="none"/></svg>
</div>
</body></html>
